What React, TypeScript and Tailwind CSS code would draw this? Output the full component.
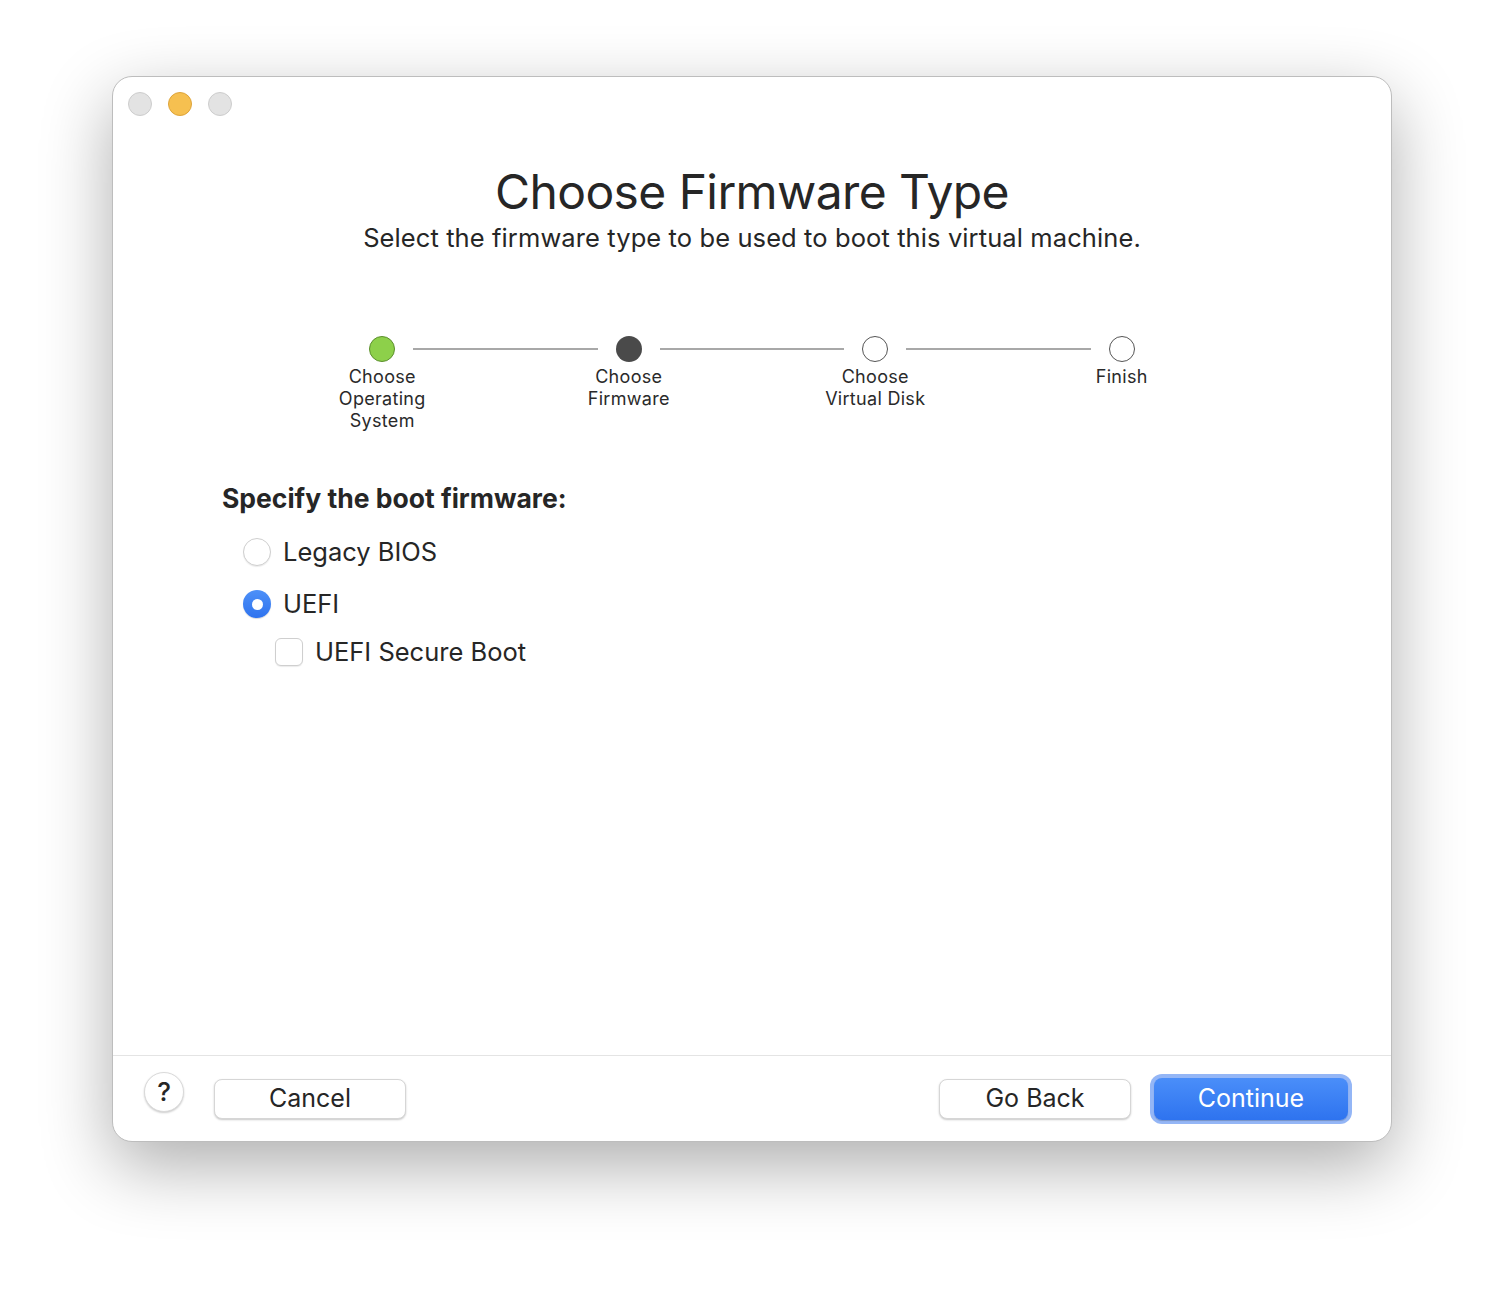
import React, { useState } from "react";

const steps = [
  { label: ["Choose", "Operating", "System"], state: "done" },
  { label: ["Choose", "Firmware"], state: "current" },
  { label: ["Choose", "Virtual Disk"], state: "todo" },
  { label: ["Finish"], state: "todo" },
];

function StepDot({ state }: { state: string }) {
  if (state === "done")
    return <div className="w-[26px] h-[26px] rounded-full bg-[#8dd04a] border border-[#5b8f2c] shrink-0" />;
  if (state === "current")
    return <div className="w-[26px] h-[26px] rounded-full bg-[#4a4a4a] shrink-0" />;
  return <div className="w-[26px] h-[26px] rounded-full bg-white border border-[#555] shrink-0" />;
}

function Radio({ checked }: { checked: boolean }) {
  return checked ? (
    <div className="w-[28px] h-[28px] rounded-full bg-gradient-to-b from-[#4d90f8] to-[#2f73ee] flex items-center justify-center shadow-[0_1px_1px_rgba(0,0,0,0.15)]">
      <div className="w-[11px] h-[11px] rounded-full bg-white" />
    </div>
  ) : (
    <div className="w-[28px] h-[28px] rounded-full bg-white border border-[#cfcfcf] shadow-[0_1px_1px_rgba(0,0,0,0.08)]" />
  );
}

export default function App() {
  const [fw, setFw] = useState("uefi");
  const [secure, setSecure] = useState(false);

  return (
    <div
      className="w-[1504px] h-[1290px] bg-white pt-[76px] pl-[112px] text-[#262626]"
      style={{ fontFamily: "Inter, 'Noto Sans', sans-serif" }}
    >
      <div className="w-[1280px] h-[1066px] rounded-[20px] bg-white border border-[#bdbdbd] shadow-[0_24px_70px_rgba(0,0,0,0.32)] flex flex-col">
        {/* traffic lights */}
        <div className="flex gap-[16px] pl-[15px] pt-[15px]">
          <div className="w-6 h-6 rounded-full bg-[#e3e3e3] border border-[#cdcdcd]" />
          <div className="w-6 h-6 rounded-full bg-[#f6c050] border border-[#dea43a]" />
          <div className="w-6 h-6 rounded-full bg-[#e3e3e3] border border-[#cdcdcd]" />
        </div>

        <h1 className="mt-[46px] text-center text-[48px] leading-[60px] font-normal tracking-[-0.6px]">
          Choose Firmware Type
        </h1>
        <p className="text-center text-[25.5px] leading-[32px] tracking-[0.1px]">
          Select the firmware type to be used to boot this virtual machine.
        </p>

        {/* steps */}
        <div className="mt-[82px] ml-[146px] w-[986px]">
          <div className="flex items-center px-[110px]">
            {steps.map((s, i) => (
              <React.Fragment key={i}>
                <StepDot state={s.state} />
                {i < steps.length - 1 && <div className="flex-1 h-[2px] bg-[#a8a8a8] mx-[18px]" />}
              </React.Fragment>
            ))}
          </div>
          <div className="grid grid-cols-4 mt-[4px]">
            {steps.map((s, i) => (
              <div key={i} className="text-center text-[18px] leading-[22px] tracking-[0.3px] text-[#2a2a2a]">
                {s.label.map((l) => (
                  <div key={l}>{l}</div>
                ))}
              </div>
            ))}
          </div>
        </div>

        {/* options */}
        <div className="ml-[109px] mt-[50px]">
          <h2 className="text-[26.5px] leading-[32px] font-bold">Specify the boot firmware:</h2>
          <div className="ml-[21px] mt-[12px] flex flex-col">
            <label className="flex items-center gap-[12px] h-[52px]" onClick={() => setFw("legacy")}>
              <Radio checked={fw === "legacy"} />
              <span className="text-[25.5px]">Legacy BIOS</span>
            </label>
            <label className="flex items-center gap-[12px] h-[52px]" onClick={() => setFw("uefi")}>
              <Radio checked={fw === "uefi"} />
              <span className="text-[25.5px]">UEFI</span>
            </label>
            <label className="flex items-center gap-[12px] h-[44px] ml-[32px]" onClick={() => setSecure(!secure)}>
              <div className="w-[28px] h-[28px] rounded-[6px] bg-white border border-[#cfcfcf] shadow-[0_1px_1px_rgba(0,0,0,0.08)] flex items-center justify-center text-[#2f73ee]">
                {secure && "✓"}
              </div>
              <span className="text-[25.5px]">UEFI Secure Boot</span>
            </label>
          </div>
        </div>

        <div className="flex-1" />

        {/* footer */}
        <div className="h-[86px] border-t border-[#e4e4e4] flex items-center px-[31px]">
          <button className="w-[40px] h-[40px] -mt-[14px] rounded-full bg-white border border-[#dadada] shadow-[0_1px_2px_rgba(0,0,0,0.2)] text-[26px] leading-none font-medium flex items-center justify-center">
            ?
          </button>
          <button className="ml-[30px] w-[192px] h-[40px] rounded-[8px] bg-white border border-[#d6d6d6] shadow-[0_1px_2px_rgba(0,0,0,0.22)] text-[25px]">
            Cancel
          </button>
          <div className="flex-1" />
          <button className="w-[192px] h-[40px] rounded-[8px] bg-white border border-[#d6d6d6] shadow-[0_1px_2px_rgba(0,0,0,0.22)] text-[25px]">
            Go Back
          </button>
          <div className="ml-[19px] mr-[8px] p-[4px] rounded-[12px] bg-[#94b6f6]">
            <button className="w-[194px] h-[42px] rounded-[8px] bg-gradient-to-b from-[#4a8ef9] to-[#2e73ef] text-white text-[25px] shadow-[0_1px_1px_rgba(0,0,0,0.2)]">
              Continue
            </button>
          </div>
        </div>
      </div>
    </div>
  );
}
